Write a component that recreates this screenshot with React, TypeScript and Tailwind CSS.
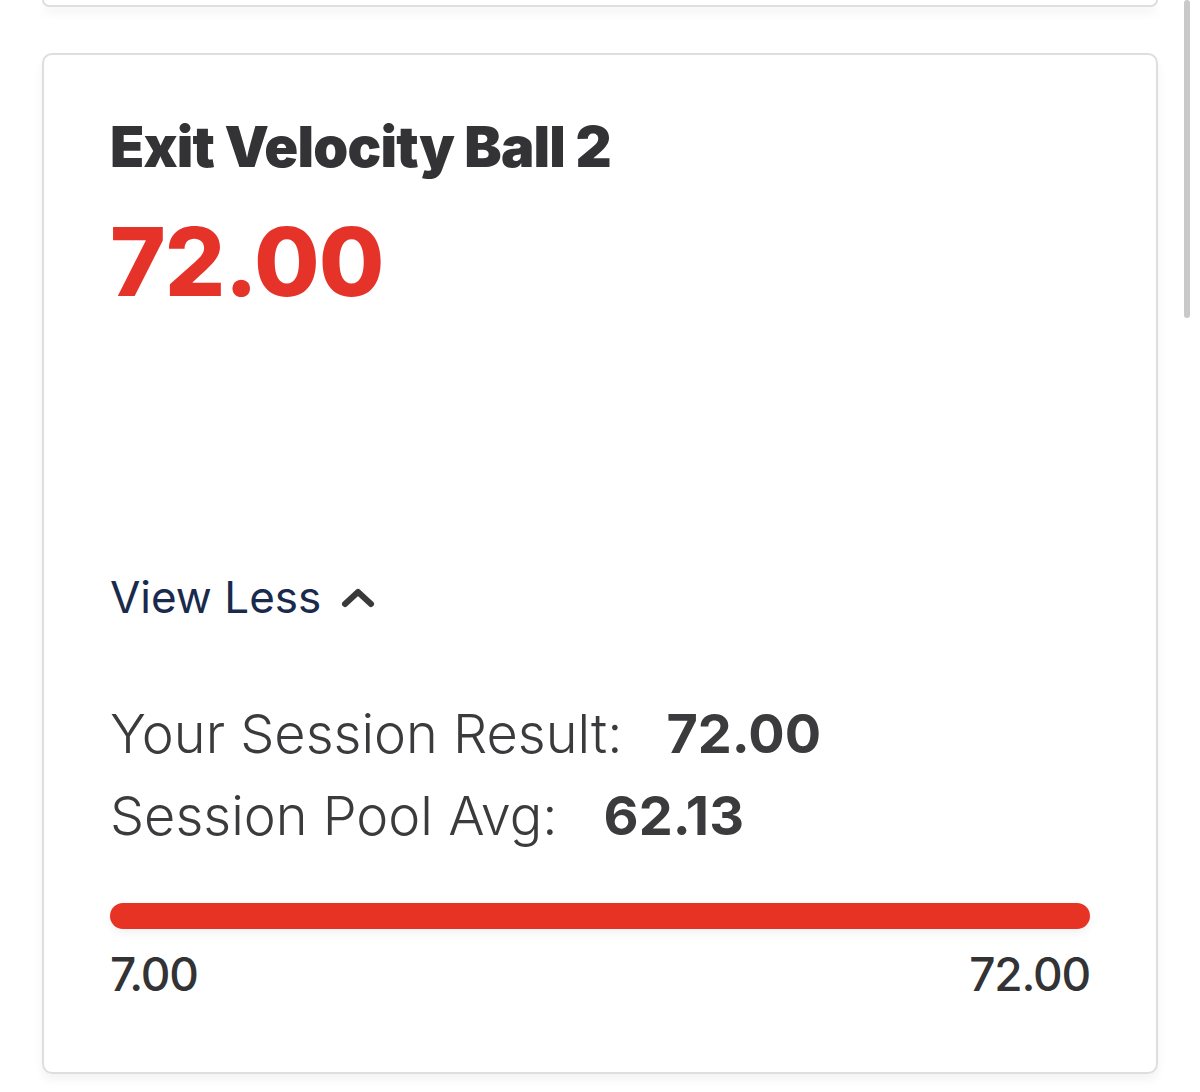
export default function App() {
  return (
    <div
      className="relative h-[1092px] w-[1200px] overflow-hidden bg-white"
      style={{ fontFamily: "Inter, 'Noto Sans', sans-serif" }}
    >
      {/* bottom of the previous card */}
      <div className="ml-[42px] h-[7px] w-[1116px] rounded-b-[10px] border-x-2 border-b-2 border-[#dedede] shadow-[0_6px_10px_rgba(0,0,0,0.05)]" />

      <div className="ml-[42px] mt-[46px] h-[1021px] w-[1116px] rounded-[10px] border-2 border-[#dedede] px-[66px] pt-[56px] shadow-[0_6px_10px_rgba(0,0,0,0.05)]">
        <h2 className="text-[56px] leading-[72px] font-black tracking-[-0.8px] text-[#333335]">
          Exit Velocity Ball 2
        </h2>
        <div className="mt-[26px] text-[95px] leading-[106px] font-extrabold tracking-[-1px] text-[#e5332a]">
          72.00
        </div>

        <button className="mt-[252px] flex items-center gap-[20px] text-[44px] leading-[60px] text-[#1a2a4d]">
          View Less
          <svg width="34" height="22" viewBox="0 0 34 22" fill="none">
            <path d="M4 18 L17 6 L30 18" stroke="#3a3a3a" strokeWidth="6" strokeLinecap="round" strokeLinejoin="round" />
          </svg>
        </button>

        <div className="mt-[66px] flex items-baseline text-[54px] leading-[82px] font-light text-[#3b3b3d]">
          <span>Your Session Result:</span>
          <span className="ml-[44px] font-bold">72.00</span>
        </div>
        <div className="flex items-baseline text-[54px] leading-[82px] font-light text-[#3b3b3d]">
          <span>Session Pool Avg:</span>
          <span className="ml-[46px] font-bold">62.13</span>
        </div>

        <div className="mt-[46px] h-[26px] w-full rounded-full bg-[#e63324] shadow-[0_4px_8px_rgba(0,0,0,0.06)]" />
        <div className="mt-[17px] flex justify-between text-[46px] leading-[56px] font-medium tracking-[-1.2px] text-[#333335]">
          <span>7.00</span>
          <span>72.00</span>
        </div>
      </div>

      {/* scrollbar */}
      <div className="absolute right-[10px] top-0 h-[318px] w-[6px] rounded-full bg-[#c9c9c9]" />
    </div>
  );
}
